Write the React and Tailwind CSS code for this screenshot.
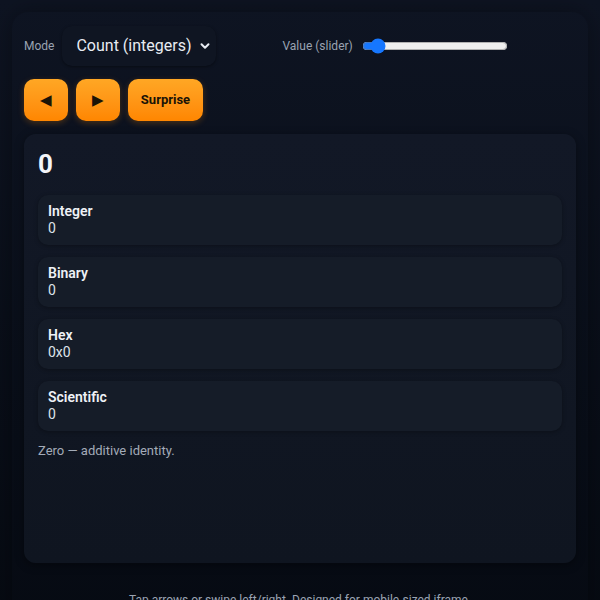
import { useState } from 'react'

const rows = [
  { label: 'Integer', value: '0' },
  { label: 'Binary', value: '0' },
  { label: 'Hex', value: '0x0' },
  { label: 'Scientific', value: '0' },
]

export default function App() {
  const [value, setValue] = useState(6)

  return (
    <div
      className="min-h-screen bg-gradient-to-b from-[#0e1422] to-[#060a12] p-3 text-white"
      style={{ fontFamily: 'Roboto, "Noto Sans", sans-serif' }}
    >
      <div className="rounded-2xl px-3 pt-[14px] pb-4 shadow-[0_0_24px_rgba(0,0,0,0.35)]">
        {/* controls */}
        <div className="flex h-10 items-center">
          <span className="mr-2 text-[12px] text-[#9aa3b2]">Mode</span>
          <div className="relative h-10 w-[154px]">
            <select className="h-10 w-full appearance-none rounded-[10px] bg-[#0f1522] pl-[14px] pr-5 text-[16px] text-[#e8ecf3] outline-none shadow-[0_1px_3px_rgba(0,0,0,0.4)]">
              <option>Count (integers)</option>
            </select>
            <svg
              className="pointer-events-none absolute right-[6px] top-[15px]"
              width="10"
              height="10"
              viewBox="0 0 10 10"
            >
              <path d="M1.5 3.2 L5 6.7 L8.5 3.2" fill="none" stroke="#e8ecf3" strokeWidth="2" strokeLinecap="round" strokeLinejoin="round" />
            </svg>
          </div>
          <span className="ml-[66px] text-[12px] text-[#9aa3b2]">Value (slider)</span>
          <input
            type="range"
            min="0"
            max="100"
            value={value}
            onChange={(e) => setValue(Number(e.target.value))}
            className="ml-[9px] w-[146px] accent-[#1677ff]"
          />
        </div>

        <div className="mt-[13px] flex gap-2">
          <button className="flex h-[42px] w-11 items-center justify-center rounded-[10px] bg-gradient-to-b from-[#ffa724] to-[#ff8600] text-[15px] text-[#1b1306] shadow-[0_2px_6px_rgba(255,140,0,0.25)]">
            ◀
          </button>
          <button className="flex h-[42px] w-11 items-center justify-center rounded-[10px] bg-gradient-to-b from-[#ffa724] to-[#ff8600] text-[15px] text-[#1b1306] shadow-[0_2px_6px_rgba(255,140,0,0.25)]">
            ▶
          </button>
          <button className="h-[42px] w-[75px] rounded-[10px] bg-gradient-to-b from-[#ffa724] to-[#ff8600] text-[13px] font-bold text-[#1b1306] shadow-[0_2px_6px_rgba(255,140,0,0.25)]">
            Surprise
          </button>
        </div>

        {/* display card */}
        <div className="mt-[13px] min-h-[429px] rounded-xl bg-gradient-to-b from-[#121826] to-[#0f1520] px-[14px] pt-[13px] shadow-[0_2px_10px_rgba(0,0,0,0.4)]">
          <div className="text-[26px] font-bold leading-[34px] text-[#f3f5f9]">0</div>
          <div className="mt-[14px] flex flex-col gap-3">
            {rows.map((r) => (
              <div key={r.label} className="rounded-[10px] bg-[#151c28] px-[10px] py-2 shadow-[0_1px_4px_rgba(0,0,0,0.3)]">
                <div className="text-[14px] font-semibold leading-[17px] text-[#eef1f6]">{r.label}</div>
                <div className="text-[14px] leading-[17px] text-[#dde2ea]">{r.value}</div>
              </div>
            ))}
          </div>
          <p className="mt-[10px] text-[13px] text-[#a3abb8]">Zero — additive identity.</p>
        </div>

        <p className="mt-[28px] text-center text-[12px] text-[#9aa3b2]">
          Tap arrows or swipe left/right. Designed for mobile-sized iframe.
        </p>
      </div>
    </div>
  )
}
